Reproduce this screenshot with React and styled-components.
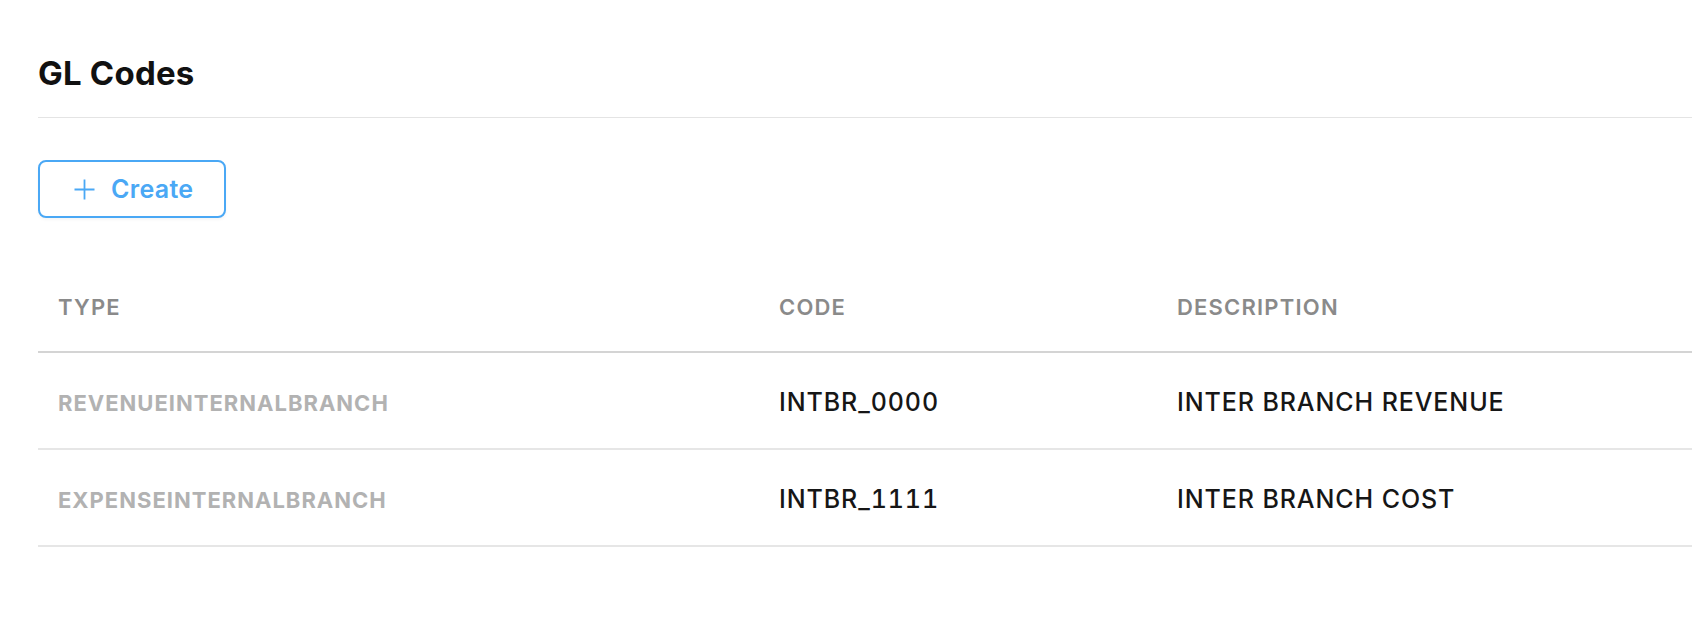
import React from 'react';
import styled, { createGlobalStyle } from 'styled-components';

const GlobalStyle = createGlobalStyle`
  html, body {
    margin: 0;
    padding: 0;
    background: #ffffff;
    font-family: Inter, "Noto Sans", "Liberation Sans", sans-serif;
    -webkit-font-smoothing: antialiased;
  }
`;

const Page = styled.div`
  padding: 55px 0 0 38px;
`;

const Title = styled.h1`
  margin: 0;
  padding-bottom: 25px;
  border-bottom: 1px solid #e4e4e4;
  font-size: 33px;
  line-height: 37px;
  font-weight: 700;
  letter-spacing: 0.2px;
  color: #111111;
`;

const CreateButton = styled.button`
  display: inline-flex;
  align-items: center;
  gap: 16px;
  box-sizing: border-box;
  height: 58px;
  margin-top: 42px;
  padding: 0 31px 0 34px;
  border: 2px solid #4aa8f5;
  border-radius: 8px;
  background: #ffffff;
  color: #4aa8f5;
  font-family: inherit;
  font-size: 25px;
  font-weight: 600;
  letter-spacing: 0.3px;
  cursor: pointer;
  box-shadow: 0 2px 3px rgba(0, 0, 0, 0.04);
`;

const Table = styled.table`
  width: 100%;
  margin-top: 47px;
  border-collapse: collapse;
  table-layout: fixed;
`;

const HeadCell = styled.th`
  box-sizing: border-box;
  width: ${(p) => p.$width || 'auto'};
  padding: 27px 20px 29px;
  border-bottom: 2px solid #d4d4d4;
  text-align: left;
  font-size: 22px;
  line-height: 30px;
  font-weight: 600;
  letter-spacing: 1.2px;
  color: #8a8a8a;
`;

const Row = styled.tr`
  border-bottom: 2px solid #e6e6e6;
`;

const Cell = styled.td`
  box-sizing: border-box;
  padding: 34px 20px 30px;
  vertical-align: baseline;
  font-size: ${(p) => (p.$muted ? '22px' : '25px')};
  line-height: 30px;
  font-weight: ${(p) => (p.$muted ? 700 : 500)};
  letter-spacing: ${(p) => (p.$muted ? '1px' : '0.9px')};
  font-variant-numeric: tabular-nums;
  color: ${(p) => (p.$muted ? '#b2b2b2' : '#161616')};
  white-space: nowrap;
`;

const PlusIcon = () => (
  <svg width="21" height="21" viewBox="0 0 21 21" fill="none">
    <path d="M10.5 0.5v20M0.5 10.5h20" stroke="#4aa8f5" strokeWidth="1.8" />
  </svg>
);

const glCodes = [
  { type: 'REVENUEINTERNALBRANCH', code: 'INTBR_0000', description: 'INTER BRANCH REVENUE' },
  { type: 'EXPENSEINTERNALBRANCH', code: 'INTBR_1111', description: 'INTER BRANCH COST' },
];

const App = () => {
  return (
    <>
      <GlobalStyle />
      <Page>
        <Title>GL Codes</Title>
        <CreateButton>
          <PlusIcon />
          Create
        </CreateButton>
        <Table>
          <thead>
            <tr>
              <HeadCell $width="721px">TYPE</HeadCell>
              <HeadCell $width="398px">CODE</HeadCell>
              <HeadCell>DESCRIPTION</HeadCell>
            </tr>
          </thead>
          <tbody>
            {glCodes.map((item) => (
              <Row key={item.code}>
                <Cell $muted>{item.type}</Cell>
                <Cell>{item.code}</Cell>
                <Cell>{item.description}</Cell>
              </Row>
            ))}
          </tbody>
        </Table>
      </Page>
    </>
  );
};

export default App;
